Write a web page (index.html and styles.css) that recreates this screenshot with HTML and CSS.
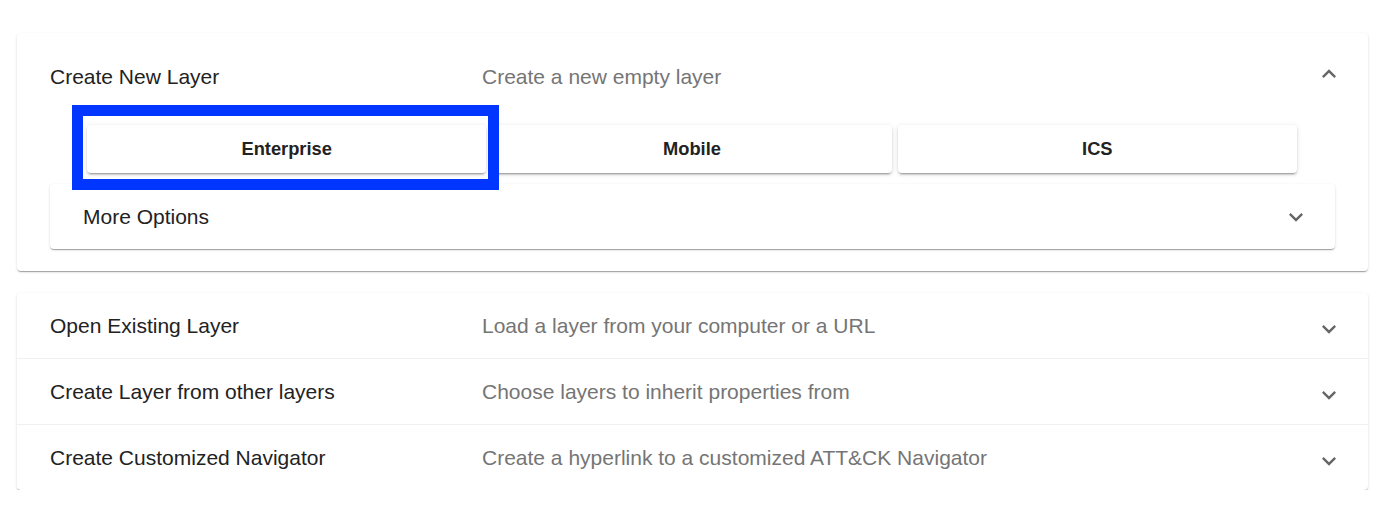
FILE: index.html
```html
<!DOCTYPE html>
<html lang="en">
<head>
<meta charset="utf-8">
<title>Layers</title>
<link rel="stylesheet" href="styles.css">
</head>
<body>
<div class="page">
  <section class="card">
    <div class="row head">
      <div class="title">Create New Layer</div>
      <div class="desc">Create a new empty layer</div>
      <svg class="chev up" viewBox="0 0 24 24"><path d="M12 8l-6 6 1.41 1.41L12 10.83l4.59 4.58L18 14z"/></svg>
    </div>
    <div class="body">
      <div class="buttons">
        <button class="btn">Enterprise<span class="highlight"></span></button>
        <button class="btn">Mobile</button>
        <button class="btn">ICS</button>
      </div>
      <div class="panel">
        <div class="panel-title">More Options</div>
        <svg class="chev" viewBox="0 0 24 24"><path d="M16.59 8.59L12 13.17 7.41 8.59 6 10l6 6 6-6z"/></svg>
      </div>
    </div>
  </section>

  <section class="card list">
    <div class="row item">
      <div class="title">Open Existing Layer</div>
      <div class="desc">Load a layer from your computer or a URL</div>
      <svg class="chev" viewBox="0 0 24 24"><path d="M16.59 8.59L12 13.17 7.41 8.59 6 10l6 6 6-6z"/></svg>
    </div>
    <div class="row item">
      <div class="title">Create Layer from other layers</div>
      <div class="desc">Choose layers to inherit properties from</div>
      <svg class="chev" viewBox="0 0 24 24"><path d="M16.59 8.59L12 13.17 7.41 8.59 6 10l6 6 6-6z"/></svg>
    </div>
    <div class="row item">
      <div class="title">Create Customized Navigator</div>
      <div class="desc">Create a hyperlink to a customized ATT&amp;CK Navigator</div>
      <svg class="chev" viewBox="0 0 24 24"><path d="M16.59 8.59L12 13.17 7.41 8.59 6 10l6 6 6-6z"/></svg>
    </div>
  </section>
</div>
</body>
</html>
```

FILE: styles.css
```css
* { box-sizing: border-box; }
html, body { margin: 0; padding: 0; background: #fff; }
body {
  font-family: "Liberation Sans", Arial, Helvetica, sans-serif;
  color: rgba(0,0,0,0.87);
}
.page {
  padding: 33px 18px 0 17px;
  display: flex;
  flex-direction: column;
  gap: 22px;
}
.card {
  background: #fff;
  border-radius: 4px;
  box-shadow: 0 2px 1px -1px rgba(0,0,0,.2), 0 1px 1px 0 rgba(0,0,0,.14), 0 1px 3px 0 rgba(0,0,0,.12);
}
.row {
  display: flex;
  align-items: center;
  padding: 0 25px 0 33px;
}
.title {
  width: 432px;
  flex: none;
  font-size: 21px;
  color: #222;
}
.desc {
  flex: 1;
  font-size: 21px;
  color: #757575;
}
.chev {
  width: 28px;
  height: 28px;
  fill: #666;
  flex: none;
}
.head { height: 88px; }
.head .chev { margin-top: -6px; }
.body {
  padding: 4px 33px 22px 33px;
}
.buttons {
  display: flex;
  gap: 6px;
  margin-left: 37px;
  width: 1210px;
}
.btn {
  position: relative;
  flex: 1;
  height: 48px;
  border: none;
  background: #fff;
  border-radius: 4px;
  font-family: "Liberation Sans", Arial, sans-serif;
  font-weight: bold;
  font-size: 18.3px;
  color: #222;
  box-shadow: 0 3px 1px -2px rgba(0,0,0,.2), 0 2px 2px 0 rgba(0,0,0,.14), 0 1px 5px 0 rgba(0,0,0,.12);
  padding: 0;
}
.highlight {
  position: absolute;
  left: -15px;
  top: -20px;
  right: -13px;
  bottom: -17px;
  border: 11px solid #0036ff;
  z-index: 2;
  pointer-events: none;
}
.panel {
  margin-top: 11px;
  height: 65px;
  display: flex;
  align-items: center;
  justify-content: space-between;
  padding: 0 25px 0 33px;
  border-radius: 4px;
  background: #fff;
  box-shadow: 0 2px 1px -1px rgba(0,0,0,.2), 0 1px 1px 0 rgba(0,0,0,.14), 0 1px 3px 0 rgba(0,0,0,.12);
}
.panel-title {
  font-size: 21px;
  color: #222;
}
.item { height: 65px; }
.item + .item { height: 66px; border-top: 1px solid #f0f0f0; }
.item .chev { margin-top: 6px; }
```
